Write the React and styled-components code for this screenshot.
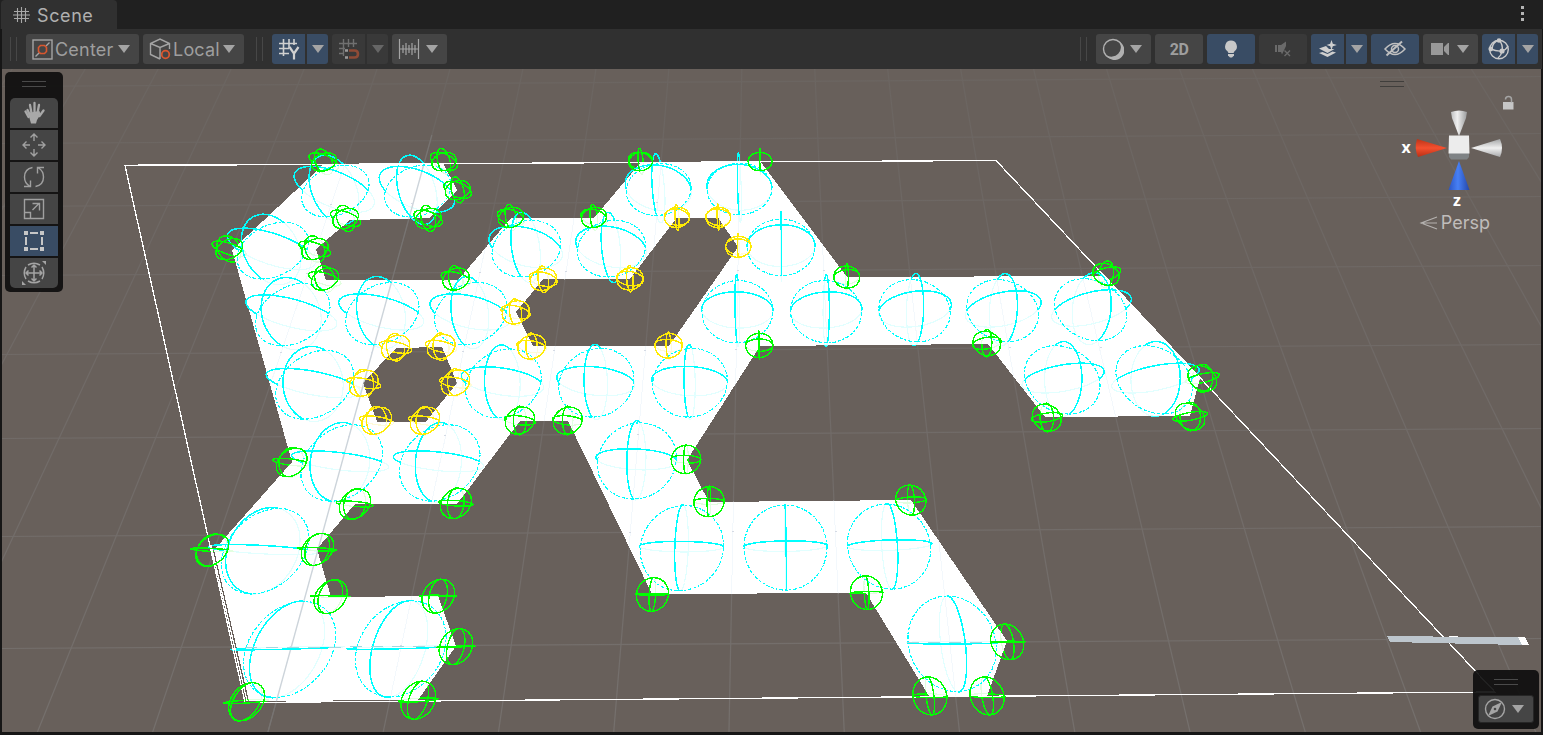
import React from "react";
import styled, { createGlobalStyle, css } from "styled-components";

const Global = createGlobalStyle`
  * { box-sizing: border-box; }
  html, body { margin: 0; background: #191919; overflow: hidden; }
  body { font-family: Inter, "Liberation Sans", sans-serif; }
`;

const Window = styled.div`
  width: 1543px;
  height: 735px;
  display: flex;
  flex-direction: column;
  background: #161616;
  overflow: hidden;
`;

const TabBar = styled.div`
  height: 29px;
  display: flex;
  justify-content: space-between;
  align-items: stretch;
  background: #202020;
  padding: 0 12px 0 1px;
`;

const Tab = styled.div`
  width: 116px;
  display: flex;
  align-items: center;
  gap: 7px;
  padding: 2px 0 0 12px;
  background: #303030;
  border-radius: 4px 4px 0 0;
  color: #b0b0b0;
  font-size: 18px;
  letter-spacing: 0.6px;
`;

const Kebab = styled.div`
  display: flex;
  flex-direction: column;
  justify-content: center;
  gap: 3px;
  width: 16px;
  padding: 0 6px 2px;
  &::before, &::after { content: ""; }
  &::before, &::after, i {
    height: 3px;
    width: 3px;
    background: #b4b4b4;
  }
`;

const Toolbar = styled.div`
  height: 40px;
  display: flex;
  justify-content: space-between;
  align-items: center;
  background: #303030;
  margin: 0 1px 0 2px;
  padding: 0 4px 0 8px;
  flex: none;
`;

const Group = styled.div`
  display: flex;
  gap: 4px;
  align-items: center;
`;

const Grip = styled.div`
  width: 7px;
  height: 24px;
  margin-right: ${(p) => p.$after || 5}px;
  margin-left: ${(p) => p.$before || 0}px;
  border: solid #474747;
  border-width: 0 1.5px;
`;

const tones = {
  plain: "#454545",
  on: "#394c64",
  off: "#393939",
};

const Button = styled.div`
  width: ${(p) => p.$w}px;
  height: 30px;
  display: flex;
  align-items: center;
  justify-content: ${(p) => (p.$spread ? "space-between" : "center")};
  padding: ${(p) => (p.$spread ? "0 9px 0 6px" : "0")};
  background: ${(p) => tones[p.$tone || "plain"]};
  border-radius: ${(p) => p.$radius || "3px"};
  color: #9e9e9e;
  font-size: 18px;
  letter-spacing: 0.2px;
  ${(p) => p.$bold && css`font: bold 16px Roboto, sans-serif; letter-spacing: -0.6px;`}
`;

const Split = styled.div`
  display: flex;
  gap: 2px;
`;

const Labelled = styled.span`
  display: flex;
  align-items: center;
  gap: 2px;
`;

const Caret = styled.div`
  border: solid transparent;
  border-width: 8px 6px 0;
  border-top-color: ${(p) => (p.$dim ? "#666" : "#a4a4a4")};
`;

const Viewport = styled.div`
  position: relative;
  flex: none;
  width: 1539px;
  height: 663px;
  margin-left: 2px;
  background: #68605b;
  overflow: hidden;
`;

const Canvas = styled.svg`
  display: block;
`;

const Floating = styled.div`
  position: absolute;
  display: flex;
  flex-direction: column;
  align-items: center;
  background: rgba(14, 14, 14, 0.92);
  border-radius: 5px;
`;

const ToolPalette = styled(Floating)`
  left: 3px;
  top: 3px;
  width: 58px;
  height: 220px;
  padding-top: 9px;
  gap: 2px;
`;

const ViewOptions = styled(Floating)`
  right: 2px;
  bottom: 3px;
  width: 66px;
  height: 59px;
  padding-top: 9px;
`;

const DragBar = styled.div`
  width: 24px;
  height: 6px;
  margin-bottom: ${(p) => p.$gap || 0}px;
  border: solid ${(p) => p.$color || "#4a4a4a"};
  border-width: 1px 0;
`;

const Tool = styled(Button)`
  width: 48px;
`;

const OptionsButton = styled(Button)`
  height: 28px;
  border: 1px solid #262626;
  padding: 0 9px 0 5px;
`;

const OrientationHandle = styled.div`
  position: absolute;
  left: 1378px;
  top: 12px;
`;

/* ---------- icons ---------- */

const Svg = ({ w = 22, h = 22, c = "#b0b0b0", sw = 1.4, children }) => (
  <svg width={w} height={h} viewBox={`0 0 ${w} ${h}`} fill="none" stroke={c} strokeWidth={sw}>
    {children}
  </svg>
);

const SceneIcon = () => (
  <Svg w={17} h={17} c="#a8a8a8" sw={1.1}>
    <path d="M4.500 1v14M8.500 0v16M12.500 1v14M1 4.500h15M0 8h17M1 11.500h15" />
  </Svg>
);

const CenterIcon = () => (
  <Svg w={21} h={21} c="#a4a4a4">
    <rect x="1" y="1" width="19" height="19" />
    <path d="M3.500 17.500l4-4M14 7l3.500-3.500" />
    <path d="M8.500 6.500h4l2 2v4l-2 2h-4l-2-2v-4z" stroke="#d9572f" strokeWidth="1.600" />
  </Svg>
);

const LocalIcon = () => (
  <Svg w={22} h={22} c="#a4a4a4">
    <path d="M11 21L1.500 16.500v-11L11 1l9.500 4.500v5.500M1.500 5.500L11 9.500l9.500-4M11 9.500V21" />
    <circle cx="16.500" cy="16.500" r="3.800" stroke="#d9572f" strokeWidth="1.800" />
  </Svg>
);

const GridYIcon = () => (
  <Svg w={22} h={22} c="#d0d0d0" sw={1.6}>
    <path d="M5.500 1v17M11 1v9M16 1v6M1 5.500h18M1 10.500h10M1 15.500h10" />
    <path d="M11.500 9l4.500 6.500V21.500M20.500 9l-4.500 6.500" strokeWidth="2.200" />
  </Svg>
);

const MagnetIcon = () => (
  <Svg w={22} h={22} c="#707070" sw={1.4}>
    <path d="M5.500 1v17M10.500 1v8M15.500 1v8M1 5.500h18M1 10.500h6M1 15.500h5" />
    <path d="M11 12.500h5.500q3.500 0 3.500 3.500t-3.500 3.500H11" stroke="#8f4b36" strokeWidth="2.600" />
    <path d="M7 12.500h3M7 19.500h3" stroke="#9a9a9a" strokeWidth="2.600" />
  </Svg>
);

const RulerIcon = () => (
  <Svg w={22} h={20} c="#a4a4a4" sw={1.2}>
    <path d="M1.500 0v20M20.500 0v20M1 10h20M5 6v8M8 4v12M11 6v8M14 4v12M17 6v8" />
  </Svg>
);

const ShadeIcon = () => (
  <Svg w={22} h={22}>
    <circle cx="11" cy="11" r="9.500" />
    <path d="M17 3.500a9.800 9.800 0 1 1-13 13.500A9.500 9.500 0 0 0 17 3.500z" fill="#b0b0b0" stroke="none" />
  </Svg>
);

const BulbIcon = () => (
  <Svg w={16} h={20}>
    <path d="M8 1.500a6 6 0 0 1 3.500 10.800L10.500 14h-5l-1-1.700A6 6 0 0 1 8 1.500z" fill="#c8c8c8" stroke="none" />
    <path d="M5 15h6v1.500l-2 2H7l-2-2z" fill="#c8c8c8" stroke="none" />
  </Svg>
);

const MuteIcon = () => (
  <Svg w={18} h={18} c="#6a6a6a">
    <path d="M1 5h2v7H1zM4 5h3l5-3.500v4.500L8 14.500 7 12H4z" fill="#6a6a6a" stroke="none" />
    <path d="M10.500 10.500l5.500 5.500M16 10.500L10.500 16" />
  </Svg>
);

const LayersIcon = () => (
  <Svg w={20} h={20}>
    <path d="M1 9.500L8 7l3 3 5.500 0-7 4zM1 14l3.500-1 5 2 5-2.500 3.500 1L9.500 18z" fill="#cfcfcf" stroke="none" />
    <path d="M13.500 1l1.300 3.700 4 1.300-4 1.300-1.300 3.700-1.300-3.700-3.700-1.300 3.700-1.300z" fill="#cfcfcf" stroke="none" />
  </Svg>
);

const HiddenIcon = () => (
  <Svg w={22} h={18} c="#c0c0c0" sw={1.5}>
    <path d="M1 9q10-11 20 0q-10 11-20 0z" />
    <circle cx="11" cy="9" r="3.500" />
    <path d="M2.500 15.500L18 1.500" strokeWidth="2" />
  </Svg>
);

const CameraIcon = () => (
  <Svg w={20} h={14}>
    <path d="M2 1h12v12H2zM15 5l4-4h1v12h-1l-4-4z" fill="#999" stroke="none" />
  </Svg>
);

const GizmoIcon = () => (
  <Svg w={22} h={22} c="#cacaca" sw={1.4}>
    <circle cx="11" cy="11.500" r="9.300" />
    <path d="M11 2Q4.500 4 4 11M3 11Q8 13.500 14 13Q18 12 20 8M11 2Q15.500 7 14 13Q13.500 17 10 20" />
    <circle cx="11" cy="2.500" r="2.300" fill="#cacaca" stroke="none" />
    <circle cx="2.800" cy="11" r="2.400" fill="#cacaca" stroke="none" />
    <circle cx="14" cy="13" r="2.600" fill="#cacaca" stroke="none" />
  </Svg>
);

const HandIcon = () => (
  <Svg w={22} h={24} c="#a8a8a8">
    <path d="M6.500 13L4.500 9M8.500 12L7 4M11.500 12V2M14.500 12L16 4M16.500 15L20.500 9.500M5.500 16L2.500 10.500" strokeWidth="2.300" strokeLinecap="round" />
    <path d="M5 12l11.500-2 1 3.500-3.500 5.500-1 3.500H8z" fill="#a8a8a8" stroke="none" />
  </Svg>
);

const MoveIcon = () => (
  <Svg w={24} h={24} c="#a0a0a0">
    <path d="M12 8V1.500M8.500 4.500L12 1l3.500 3.500M12 16v6.500M8.500 19.500L12 23l3.500-3.500M8 12H1.500M4.500 8.500L1 12l3.500 3.500M16 12h6.500M19.500 8.500L23 12l-3.500 3.500" />
  </Svg>
);

const RotateIcon = () => (
  <Svg w={22} h={22} c="#a0a0a0">
    <path d="M9.500 1.500Q1.500 3 1.500 11q0 6 5 9M1 20.500h6.500v-6M12.500 20.500q8-1.500 8-9.500 0-6-5-9M21 1.500h-6.500v6" />
  </Svg>
);

const ScaleIcon = () => (
  <Svg w={22} h={22} c="#a0a0a0">
    <path d="M1.500 1.500h19v19h-19zM1.500 14.500h6v6M9.500 12l6.500-6.500M9.500 5.500h7v7" />
  </Svg>
);

const RectIcon = () => (
  <Svg w={22} h={22} c="#c6c6c6" sw={2}>
    <path d="M7 3h8M7 19h8M3 7v8M19 7v8" />
    <path d="M1 1h4v4H1zM17 1h4v4h-4zM1 17h4v4H1zM17 17h4v4h-4z" fill="#c6c6c6" stroke="none" />
  </Svg>
);

const TransformIcon = () => (
  <Svg w={26} h={26} c="#a4a4a4" sw={1.5}>
    <path d="M13 5v16M5 13h16M10.500 7.500L13 5l2.500 2.500M10.500 18.500L13 21l2.500-2.500M7.500 10.500L5 13l2.500 2.500M18.500 10.500L21 13l-2.500 2.500" />
    <path d="M7 5Q13 1.500 19 5M21 7Q24.500 13 21 19M19 21Q13 24.500 7 21M5 19Q1.500 13 5 7" />
    <path d="M21 1h4v4zM1 21v4h4z" fill="#a4a4a4" stroke="none" />
  </Svg>
);

const CompassIcon = () => (
  <Svg w={22} h={22} c="#a4a4a4">
    <circle cx="11" cy="11" r="9.500" />
    <path d="M18 4L13.500 13.500 4 18 8.500 8.500z" fill="#a4a4a4" stroke="none" />
    <circle cx="11" cy="11" r="1.300" fill="#454545" stroke="none" />
  </Svg>
);

/* ---------- scene camera ---------- */

const FOCAL = 575;
const CX = 778;
const CY = 400.5;
const PITCH = Math.atan2(575, 224);
const YAW = -0.011;
const SIN = Math.sin(PITCH);
const COS = Math.cos(PITCH);

const unproject = (sx, sy) => {
  const s = (CY - sy) / FOCAL;
  const z = (s * SIN + COS) / (SIN - s * COS);
  return [((sx - CX) * (z * COS + SIN)) / FOCAL, z];
};

const project = (x, h, z) => {
  const depth = z * COS + (1 - h) * SIN;
  const up = z * SIN - (1 - h) * COS;
  return [CX + (FOCAL * x) / depth, CY - (FOCAL * up) / depth];
};

const arc = (sx, sy, r, plane, from, to) => {
  const [x, z] = unproject(sx, sy);
  const pts = [];
  for (let i = 0; i <= 32; i++) {
    const a = from + ((to - from) * i) / 32;
    const u = r * Math.cos(a);
    const v = r * Math.sin(a);
    let dx = u;
    let dz = 0;
    let h = v;
    if (plane === "yz") {
      dx = 0;
      dz = u;
    }
    if (plane === "xz") {
      dz = v;
      h = 0;
    }
    const rx = dx * Math.cos(YAW) + dz * Math.sin(YAW);
    const rz = -dx * Math.sin(YAW) + dz * Math.cos(YAW);
    pts.push(project(x + rx, h, z + rz).map((n) => n.toFixed(1)).join(" "));
  }
  return "M" + pts.join("L");
};

const lower = (x, y, r) => arc(x, y, r, "xy", Math.PI, 2 * Math.PI) + arc(x, y, r, "yz", Math.PI, 2 * Math.PI);
const upper = (x, y, r) => arc(x, y, r, "xy", 0, Math.PI) + arc(x, y, r, "yz", 0, Math.PI);
const flat = (x, y, r) => arc(x, y, r, "xz", 0, 2 * Math.PI);

const CELL = 0.0707;
const CORNER = 0.0264;

const cells = [
  [335.5, 190.500], [418, 190.500], [658.7, 189], [739.5, 188.500],
  [273, 250], [526.5, 248], [611.5, 248], [781, 246.800],
  [293, 314], [382.500, 313], [471, 313], [737.5, 311], [826, 311], [914.500, 310], [1002.500, 310], [1090.500, 309],
  [315, 384], [503.5, 382.500], [596.500, 382], [690, 382], [1062, 379], [1154, 379],
  [342, 462], [440, 462], [637, 460],
  [265.5, 550], [682, 547], [785.5, 546.500], [889, 545.500],
  [290, 648], [401, 647.500], [952, 642.500],
];

const green = [
  [324, 162], [444, 161.500], [457.7, 190], [345.7, 218.500], [428.3, 218.500], [229.3, 249], [315, 249],
  [325, 279], [456, 279], [511, 217.500], [594, 217.500], [640.7, 161.500], [760, 161.500], [846.7, 277],
  [759.3, 345.300], [986.7, 343.300], [1106, 274.300], [1202.3, 378.300], [1190, 416.500], [1046.7, 417.500],
  [291.7, 462.300], [355, 504], [456, 503.300], [520, 420.500], [567.8, 420.500], [686, 459.300],
  [709, 501.500], [910.8, 500], [652.5, 594.300], [866.4, 592.500], [212.3, 550], [317.5, 549.300],
  [330.7, 596.500], [438.3, 596], [456, 646.500], [246.7, 701.500], [418.3, 700], [1007.2, 641.700],
  [929.8, 695.700], [987, 695.700],
];

const yellow = [
  [395.7, 347.300], [441.2, 346.700], [363.8, 383.300], [455.5, 382.700], [376.7, 420.700], [425, 420.700],
  [543.3, 279.300], [630, 278.700], [677, 217.300], [718.3, 217.300], [738.3, 246.700], [515.7, 312.300],
  [531.7, 346.700], [668.7, 345.700],
];

const mesh =
  "M324 164L443 163 457 190 430 218 350 220 316 249 326 280.500 458 280 511 218 594 218 641 162 760 161 847 277" +
  " 1105 276 1200 378 1190 416 1045 417 988 344 760 346 687 460 709 502 911 500 1007 641 987 696 929 696 866 593" +
  " 652 594 568 421 520 421 457 504 355 504 317 549 331 597 438 596 456 646 418 700 249 701 214 550 292 462 232 250Z" +
  "M396 348L442 347 457 383 426 421.500 377 421.500 363 383Z" +
  "M543 279.500L630 279 677 217.500 718 217.500 738 247 669 346 533 346 516 312Z";

const columns = Array.from({ length: 26 }, (_, i) => i - 3);
const rows = [86, 143, 206, 275, 354, 438, 536, 648];
const columnAt = (k, y) => {
  const top = 450 + 72.95 * (k - 5);
  const bottom = 291 + 109.9 * (k - 5);
  return top + ((bottom - top) * (y - 69)) / 579;
};
const columnPath = (k) => `M${columnAt(k, 69)} 69L${columnAt(k, 733)} 733`;
const rowPath = (y) => `M2 ${y + 0.5}L1541 ${y - 9.5}`;

const Strokes = ({ list, r, color, make, dash, width = 1.45 }) => (
  <path
    d={list.map(([x, y]) => make(x, y, r)).join("")}
    stroke={color}
    strokeWidth={width}
    strokeDasharray={dash}
  />
);

const SceneDrawing = () => (
  <Canvas width="1539" height="663" viewBox="2 69 1539 663" fill="none" strokeWidth="1" shapeRendering="crispEdges">
    <clipPath id="surface"><path d={mesh} clipRule="evenodd" /></clipPath>
    <linearGradient id="fade" gradientUnits="userSpaceOnUse" x1="0" y1="69" x2="0" y2="733">
      <stop offset="0" stopColor="#6b6561" />
      <stop offset="0.35" stopColor="#6f6966" />
      <stop offset="1" stopColor="#75706d" />
    </linearGradient>
    <g stroke="url(#fade)" strokeWidth="1.2" shapeRendering="auto">
      {columns.map((k) => <path key={k} d={columnPath(k)} />)}
      {rows.map((y) => <path key={y} d={rowPath(y)} />)}
      <path d={`M${columnAt(5, 135)} 135L${columnAt(5, 733)} 733`} stroke="#787573" />
    </g>

    <Strokes list={cells} r={CELL} color="#00ffff" make={lower} />
    <Strokes list={green} r={CORNER} color="#00ff00" make={lower} />
    <Strokes list={yellow} r={CORNER} color="#ffeb04" make={lower} />

    <path d={mesh} fill="#fff" fillRule="evenodd" />

    <g clipPath="url(#surface)">
      {columns.map((k) => <path key={k} d={columnPath(k)} stroke="#f3f8fc" />)}
      <Strokes list={cells} r={CELL} color="#e2ffff" make={lower} width={1.2} />
      <Strokes list={green} r={CORNER} color="#e2ffe0" make={lower} width={1.2} />
      <Strokes list={yellow} r={CORNER} color="#fffbd8" make={lower} width={1.2} />
      <path d={columnPath(5)} stroke="#cdd4da" shapeRendering="auto" strokeWidth="1.4" />
      {rows.slice(1).map((y) =>
        columns.map((k) => (
          <rect key={k} x={Math.round(columnAt(k, y)) - 1} y={Math.round(y - columnAt(k, y) * 0.0065)} width="2" height="1" fill="#d5dae4" />
        ))
      )}
    </g>

    <Strokes list={cells} r={CELL} color="#00ffff" make={flat} dash="3 1.500 2 1.500 4 2" width={1.15} />
    <Strokes list={cells} r={CELL} color="#00ffff" make={upper} width={1.5} />
    <path d="M245 647.500L452 646.500M907 642.500L1005 642.500" stroke="#a5d8de" strokeDasharray="12 9" />

    <g stroke="#fff" strokeWidth="1.3">
      <path d="M125 165.500L996 160.500 1495 692 245 702.500Z" />
      <path d="M138 164.500L200 164.500M211 545L247 701" />
    </g>

    <Strokes list={green} r={CORNER} color="#00ff00" make={flat} />
    <Strokes list={green} r={CORNER} color="#00ff00" make={upper} />
    <Strokes list={yellow} r={CORNER} color="#ffeb04" make={flat} />
    <Strokes list={yellow} r={CORNER} color="#ffeb04" make={upper} />

    <path d="M1387 636L1525 637.500 1529 645 1520 645 1390 642Z" fill="#bdc6cd" />
    <path d="M1518 637L1525 637 1529 645 1522 645Z" fill="#fff" />
    <path d="M1449 636.500h9" stroke="#fff" />
  </Canvas>
);

const AxisText = styled.text`
  font: bold 16px "Noto Sans", sans-serif;
  fill: #fff;
`;

const ModeText = styled.text`
  font: 18px Inter, sans-serif;
  fill: #c0bdbb;
`;

const AxisGizmoBox = styled.svg`
  position: absolute;
  left: 1388px;
  top: 21px;
`;

const AxisGizmo = () => (
  <AxisGizmoBox width="140" height="150" viewBox="1390 90 140 150">
    <defs>
      <linearGradient id="coneV"><stop offset="0" stopColor="#bfc0c1" /><stop offset=".4" stopColor="#efefef" /><stop offset="1" stopColor="#9b9c9d" /></linearGradient>
      <linearGradient id="coneH" x2="0" y2="1"><stop offset="0" stopColor="#a4a5a6" /><stop offset=".5" stopColor="#f0f0f0" /><stop offset="1" stopColor="#a8a9ab" /></linearGradient>
      <linearGradient id="coneR" x2="0" y2="1"><stop offset="0" stopColor="#bb3418" /><stop offset=".5" stopColor="#f4502f" /><stop offset="1" stopColor="#b83015" /></linearGradient>
      <linearGradient id="coneB"><stop offset="0" stopColor="#2b55c4" /><stop offset=".45" stopColor="#4780f5" /><stop offset="1" stopColor="#2546a8" /></linearGradient>
    </defs>
    <path d="M1451 112q8-3 16 0l-1 6-7 18-7-18z" fill="url(#coneV)" />
    <path d="M1417 139q-3 9 1 18l29-9z" fill="url(#coneR)" />
    <path d="M1471 148l29-9q4 9 0 18z" fill="url(#coneH)" />
    <path d="M1459 161l10.500 29h-21z" fill="url(#coneB)" />
    <path d="M1449 153h20v4l-2 2.500h-16l-2-2.500z" fill="#7f8385" />
    <path d="M1449 135.500h20l.5 18h-21z" fill="#ececec" />
    <AxisText x="1401.500" y="152.500">x</AxisText>
    <AxisText x="1453" y="205.500">z</AxisText>
    <path d="M1437 217l-16 6 16 6M1423 223h14" stroke="#b5b2b0" fill="none" strokeWidth="1.100" />
    <ModeText x="1440.800" y="229.200">Persp</ModeText>
    <path d="M1503 102h10.500v7.500h-10.500z" fill="#c6c6c6" />
    <path d="M1505.500 99.500q0-3 3-3t3 3v3" stroke="#a5a5a5" fill="none" strokeWidth="1.500" />
  </AxisGizmoBox>
);

const tools = [
  [HandIcon, "5px 5px 0 0"],
  [MoveIcon, "0"],
  [RotateIcon, "0"],
  [ScaleIcon, "0"],
  [RectIcon, "0", "on"],
  [TransformIcon, "0 0 5px 5px"],
];

export default function App() {
  return (
    <Window>
      <Global />
      <TabBar>
        <Tab><SceneIcon />Scene</Tab>
        <Kebab><i /></Kebab>
      </TabBar>
      <Toolbar>
        <Group>
          <Grip />
          <Button $w={113} $spread><Labelled><CenterIcon />Center</Labelled><Caret /></Button>
          <Button $w={101} $spread><Labelled><LocalIcon />Local</Labelled><Caret /></Button>
          <Grip $before={8} />
          <Split>
            <Button $w={33} $tone="on" $radius="3px 0 0 3px"><GridYIcon /></Button>
            <Button $w={21} $tone="on" $radius="0 3px 3px 0"><Caret /></Button>
          </Split>
          <Split>
            <Button $w={33} $tone="off" $radius="3px 0 0 3px"><MagnetIcon /></Button>
            <Button $w={21} $tone="off" $radius="0 3px 3px 0"><Caret $dim /></Button>
          </Split>
          <Button $w={55} $spread><RulerIcon /><Caret /></Button>
        </Group>
        <Group>
          <Grip />
          <Button $w={55} $spread><ShadeIcon /><Caret /></Button>
          <Button $w={48} $bold>2D</Button>
          <Button $w={48} $tone="on"><BulbIcon /></Button>
          <Button $w={48} $tone="off"><MuteIcon /></Button>
          <Split>
            <Button $w={33} $tone="on" $radius="3px 0 0 3px"><LayersIcon /></Button>
            <Button $w={21} $tone="on" $radius="0 3px 3px 0"><Caret /></Button>
          </Split>
          <Button $w={48} $tone="on"><HiddenIcon /></Button>
          <Button $w={55} $spread><CameraIcon /><Caret /></Button>
          <Split>
            <Button $w={33} $tone="on" $radius="3px 0 0 3px"><GizmoIcon /></Button>
            <Button $w={21} $tone="on" $radius="0 3px 3px 0"><Caret /></Button>
          </Split>
        </Group>
      </Toolbar>
      <Viewport>
        <SceneDrawing />
        <OrientationHandle><DragBar $color="#403e3c" /></OrientationHandle>
        <AxisGizmo />
        <ToolPalette>
          <DragBar $gap={9} />
          {tools.map(([Icon, radius, tone], i) => (
            <Tool key={i} $w={48} $radius={radius} $tone={tone}><Icon /></Tool>
          ))}
        </ToolPalette>
        <ViewOptions>
          <DragBar $gap={10} />
          <OptionsButton $w={56} $spread><CompassIcon /><Caret /></OptionsButton>
        </ViewOptions>
      </Viewport>
    </Window>
  );
}
